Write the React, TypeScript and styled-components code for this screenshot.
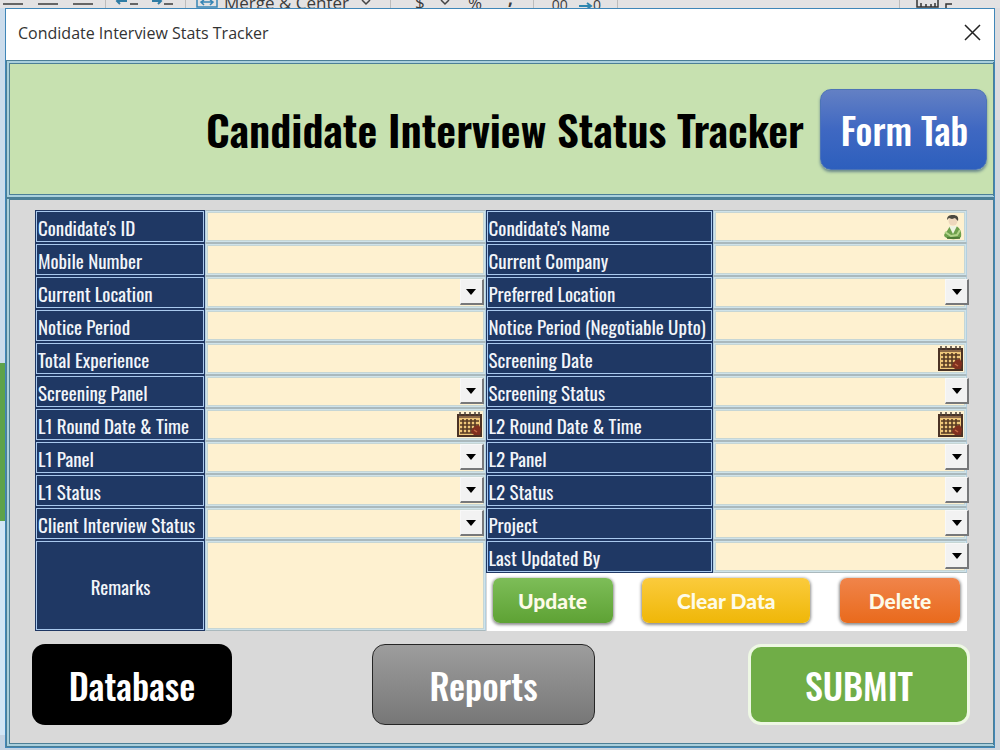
import React, { useId } from 'react';
import styled, { createGlobalStyle } from 'styled-components';

const display = 'Oswald, "Roboto Condensed", "Open Sans Condensed", sans-serif';

const GlobalStyle = createGlobalStyle`
  * { box-sizing: border-box; }
  body { margin: 0; background: #d3dfec; font-family: ${display}; }
  button { cursor: pointer; }
`;

const Desktop = styled.div`
  display: flex;
  flex-direction: column;
  min-height: 100vh;
  background:
    linear-gradient(to bottom, #cbdcec 0 363px, #5ea24a 363px 521px, #d2e6f5 521px 735px, #c4d3e2 735px) left / 50% 100% no-repeat,
    linear-gradient(to bottom, #dcdcdf 0 120px, #cfd6de 120px);
`;

const Ribbon = styled.div`
  height: 8px;
  overflow: hidden;
  background: #e3e2e3;
  svg { display: block; }
`;

const Dialog = styled.main`
  flex: 1;
  display: flex;
  flex-direction: column;
  margin: 0 5px 2px;
  border: 1px solid #3f86b8;
  background: #a9cfdc;
`;

const TitleBar = styled.header`
  display: flex;
  align-items: center;
  justify-content: space-between;
  height: 51px;
  padding: 0 13px 4px 12px;
  background: #fff;
  color: #333;
  font: 400 16px "Open Sans", "Noto Sans", sans-serif;
`;

const CloseButton = styled.button`
  display: flex;
  padding: 0;
  border: 0;
  background: none;
  color: #222;
`;

const Banner = styled.section`
  display: flex;
  align-items: center;
  justify-content: flex-end;
  gap: 16px;
  height: 138px;
  padding: 0 6px 0 2px;
  border: 4px double #4c7f96;
  border-right-width: 1px;
  background: #c7e1b0;
  background-clip: padding-box;
  h1 {
    margin: 0;
    color: #000;
    font-weight: 600;
    font-size: 43px;
    line-height: 64px;
    white-space: nowrap;
  }
`;

const FormTabButton = styled.button`
  width: 167px;
  height: 81px;
  padding: 0 0 0 2px;
  border: 1px solid #4d74b6;
  border-radius: 11px;
  background: linear-gradient(#6380c4, #3f68c2 50%, #2d5fbd);
  box-shadow: 0 2px 3px #6b8a8a;
  color: #fff;
  font: 500 37px ${display};
`;

const Body = styled.form`
  flex: 1;
  display: flex;
  flex-direction: column;
  gap: 13px;
  padding: 10px 23px 15px 22px;
  border: 4px double #4c7f96;
  border-top: 2px solid #4c7f96;
  border-right-width: 1px;
  background: #d9d9d9;
  background-clip: padding-box;
`;

const Columns = styled.div`
  display: grid;
  grid-template-columns: 451fr 482fr;
  padding-left: 3px;
  padding-right: 3px;
`;

const Column = styled.div`
  display: flex;
  flex-direction: column;
  min-width: 0;
`;

const Row = styled.div<{ $label: number; $tall?: boolean }>`
  display: grid;
  grid-template-columns: ${(p) => p.$label}px minmax(0, 1fr);
  height: ${(p) => (p.$tall ? '91px' : '33px')};
  label {
    display: flex;
    align-items: center;
    justify-content: ${(p) => (p.$tall ? 'center' : 'flex-start')};
    padding-left: 1px;
    border: 1px solid #a9c9ee;
    outline: 1px solid #1f3763;
    margin: 1px;
    background: #1f3864;
    color: #f2f5fa;
    font-size: 19px;
    line-height: 24px;
    white-space: nowrap;
  }
`;

const Cell = styled.div`
  position: relative;
  display: flex;
  padding: 1px;
  border: 1px solid #aab9bd;
  border-right-color: #b3d0e0;
  border-left-color: #b3d0e0;
  background: #cfe3ea;
  input, select, textarea {
    appearance: none;
    flex: 1;
    min-width: 0;
    margin: 0;
    padding: 0 4px;
    border: 1px solid #c6d6d5;
    border-radius: 0;
    outline: 0;
    resize: none;
    background: #fef1d0;
    color: #1f3864;
    font: 400 16px ${display};
  }
`;

const Arrow = styled.span<{ $overhang: boolean }>`
  position: absolute;
  top: 2px;
  right: ${(p) => (p.$overhang ? '-3px' : '1px')};
  display: grid;
  place-items: center;
  width: 24px;
  height: 26px;
  border: 1px solid #f8f8f8;
  border-right: 2px solid #77787a;
  border-bottom: 2px solid #77787a;
  background: #f2f2f2;
  pointer-events: none;
`;

const IconButton = styled.button`
  position: absolute;
  top: 3px;
  right: 3px;
  display: flex;
  padding: 0;
  border: 0;
  background: none;
`;

const Actions = styled.div`
  display: flex;
  flex: 1;
  justify-content: space-between;
  align-items: flex-start;
  margin-left: 1px;
  padding: 5px 7px 5px 6px;
  background: #fff;
`;

const ActionButton = styled.button<{ $width: number; $from: string; $to: string }>`
  width: ${(p) => p.$width}px;
  height: 45px;
  padding: 0;
  border: 0;
  border-radius: 7px;
  background: linear-gradient(${(p) => p.$from}, ${(p) => p.$to});
  box-shadow: 0 1px 3px 1px #8f8f8f;
  color: #fdfbe8;
  font: 900 21px Lato, "Open Sans", sans-serif;
`;

const Footer = styled.footer`
  display: grid;
  grid-template-columns: 340fr 376fr 222fr;
`;

const FooterButton = styled.button<{ $width: number; $border: string; $fill: string }>`
  width: ${(p) => p.$width}px;
  height: 81px;
  padding: 0;
  border: ${(p) => p.$border};
  border-radius: 13px;
  background: ${(p) => p.$fill};
  color: #fff;
  font: 500 36px ${display};
`;

const CalendarIcon = () => (
  <svg width="25" height="25" viewBox="0 0 25 25" aria-hidden="true">
    <rect x="1" y="3" width="23" height="21" fill="#efc77a" stroke="#4b3325" strokeWidth="2" />
    <path d="M2 5h21" stroke="#8e6a48" strokeWidth="2" />
    <path d="M3 0v4M8 0v4M13 0v4M18 0v4M22 0v4" stroke="#4b4038" strokeWidth="1.5" />
    <path d="M6 7v14M10 7v14M14 7v14M18 7v14M3 9h19M3 13h19M3 17h19M3 21h19" stroke="#563822" strokeWidth="1.6" />
    <path d="M15 17l3-3 4-1 2 4-1 6-6 0-3-3z" fill="#80301f" />
    <path d="M17 18l3 2" stroke="#c46a45" strokeWidth="1.5" />
  </svg>
);

const PersonIcon = () => (
  <svg width="20" height="26" viewBox="0 0 20 26" aria-hidden="true">
    <path d="M2 23c-2-2 0-4 2-6l3-5h6c4 2 6 6 5 11-3 3-12 3-16 0z" fill="#6da04c" />
    <path d="M2 18l6 4 6-1 3-5" stroke="#b2d48a" strokeWidth="2" fill="none" />
    <path d="M6 12l4 8 4-8z" fill="#eef3e2" />
    <circle cx="10" cy="7" r="4.5" fill="#eed7bd" />
    <path d="M4 6c0-4 2-5 6-5 4 0 6 2 5 6l-3-3-3 1-3-1z" fill="#4c4a40" />
    <path d="M4 24h13" stroke="#45702f" strokeWidth="1.5" />
  </svg>
);

type Kind = 'text' | 'select' | 'date' | 'person' | 'area';

type FieldProps = { label: string; kind: Kind; width: number; overhang?: boolean };

function Field({ label, kind, width, overhang = false }: FieldProps) {
  const id = useId();
  return (
    <Row $label={width} $tall={kind === 'area'}>
      <label htmlFor={id}>{label}</label>
      <Cell>
        {kind === 'select' && (
          <>
            <select id={id} defaultValue=""><option value="" /></select>
            <Arrow $overhang={overhang}>
              <svg width="10" height="6" viewBox="0 0 10 6" aria-hidden="true"><path d="M0 0h10L5 6z" fill="#000" /></svg>
            </Arrow>
          </>
        )}
        {kind === 'area' && <textarea id={id} />}
        {(kind === 'text' || kind === 'date' || kind === 'person') && <input id={id} type="text" />}
        {kind === 'date' && <IconButton type="button" aria-label={`Pick ${label}`}><CalendarIcon /></IconButton>}
        {kind === 'person' && <IconButton type="button" aria-label="Find candidate"><PersonIcon /></IconButton>}
      </Cell>
    </Row>
  );
}

const left: [string, Kind][] = [
  ["Condidate's ID", 'text'],
  ['Mobile Number', 'text'],
  ['Current Location', 'select'],
  ['Notice Period', 'text'],
  ['Total Experience', 'text'],
  ['Screening Panel', 'select'],
  ['L1 Round Date & Time', 'date'],
  ['L1 Panel', 'select'],
  ['L1 Status', 'select'],
  ['Client Interview Status', 'select'],
  ['Remarks', 'area'],
];

const right: [string, Kind][] = [
  ["Condidate's Name", 'person'],
  ['Current Company', 'text'],
  ['Preferred Location', 'select'],
  ['Notice Period (Negotiable Upto)', 'text'],
  ['Screening Date', 'date'],
  ['Screening Status', 'select'],
  ['L2 Round Date & Time', 'date'],
  ['L2 Panel', 'select'],
  ['L2 Status', 'select'],
  ['Project', 'select'],
  ['Last Updated By', 'select'],
];

const RibbonArt = () => (
  <svg width="1000" height="8" viewBox="0 0 1000 8" aria-hidden="true">
    <path d="M3 4h20M38 4h20M73 4h20M130 4h8M164 4h9" stroke="#3c3c3c" strokeWidth="1.5" />
    <path d="M105.5 0v8M185.5 0v8M390.5 0v8M533.5 0v8M617.5 0v8M899.5 0v8" stroke="#bcbcbc" />
    <path d="M117 1h10M120-2l-3 3 3 3M152 1h9M158-2l3 3-3 3" stroke="#2f7ca5" strokeWidth="2" fill="none" />
    <path d="M197 0v7h20V0M202 2h10M204 0l-3 2 3 3M210 0l3 2-3 3" stroke="#3785b5" strokeWidth="1.5" fill="none" />
    <path d="M362 0l4 4 4-4M441 0l4 4 4-4" stroke="#444" strokeWidth="1.5" fill="none" />
    <path d="M579 6h12M587 3l4 3-4 3" stroke="#2f87b0" strokeWidth="2" fill="none" />
    <path d="M917 0v7h21V0M921 7V3M926 7V4M931 7V4M935 7V3M946 8V4h6" stroke="#333" strokeWidth="1.5" fill="none" />
    <g fill="#3b3b3b" fontFamily='"Open Sans", sans-serif' fontSize="17">
      <text x="224" y="9">Merge &amp; Center</text>
      <text x="415" y="8">$</text>
      <text x="468" y="9">%</text>
      <text x="508" y="5" fontWeight="700">,</text>
      <text x="548" y="10" fontSize="14">.00</text>
      <text x="593" y="10" fontSize="14">0</text>
    </g>
  </svg>
);

export default function App() {
  return (
    <Desktop>
      <GlobalStyle />
      <Ribbon><RibbonArt /></Ribbon>
      <Dialog>
        <TitleBar>
          <span>Condidate Interview Stats Tracker</span>
          <CloseButton type="button" aria-label="Close">
            <svg width="17" height="17" viewBox="0 0 17 17"><path d="M1 1l15 15M16 1L1 16" stroke="currentColor" strokeWidth="1.5" /></svg>
          </CloseButton>
        </TitleBar>
        <Banner>
          <h1>Candidate Interview Status Tracker</h1>
          <FormTabButton type="button">Form Tab</FormTabButton>
        </Banner>
        <Body onSubmit={(e) => e.preventDefault()}>
          <Columns>
            <Column>
              {left.map(([label, kind]) => <Field key={label} label={label} kind={kind} width={170} />)}
            </Column>
            <Column>
              {right.map(([label, kind]) => <Field key={label} label={label} kind={kind} width={227} overhang />)}
              <Actions>
                <ActionButton type="button" $width={120} $from="#7dbd58" $to="#5ea234">Update</ActionButton>
                <ActionButton type="button" $width={168} $from="#fbcb3c" $to="#efb708">Clear Data</ActionButton>
                <ActionButton type="button" $width={120} $from="#f0844a" $to="#e96a1c">Delete</ActionButton>
              </Actions>
            </Column>
          </Columns>
          <Footer>
            <FooterButton type="button" $width={200} $border="0" $fill="#000">Database</FooterButton>
            <FooterButton type="button" $width={223} $border="1px solid #262626" $fill="linear-gradient(#9d9d9d, #777)">Reports</FooterButton>
            <FooterButton type="submit" $width={222} $border="3px solid #eef8e4" $fill="#70ad47">SUBMIT</FooterButton>
          </Footer>
        </Body>
      </Dialog>
    </Desktop>
  );
}
